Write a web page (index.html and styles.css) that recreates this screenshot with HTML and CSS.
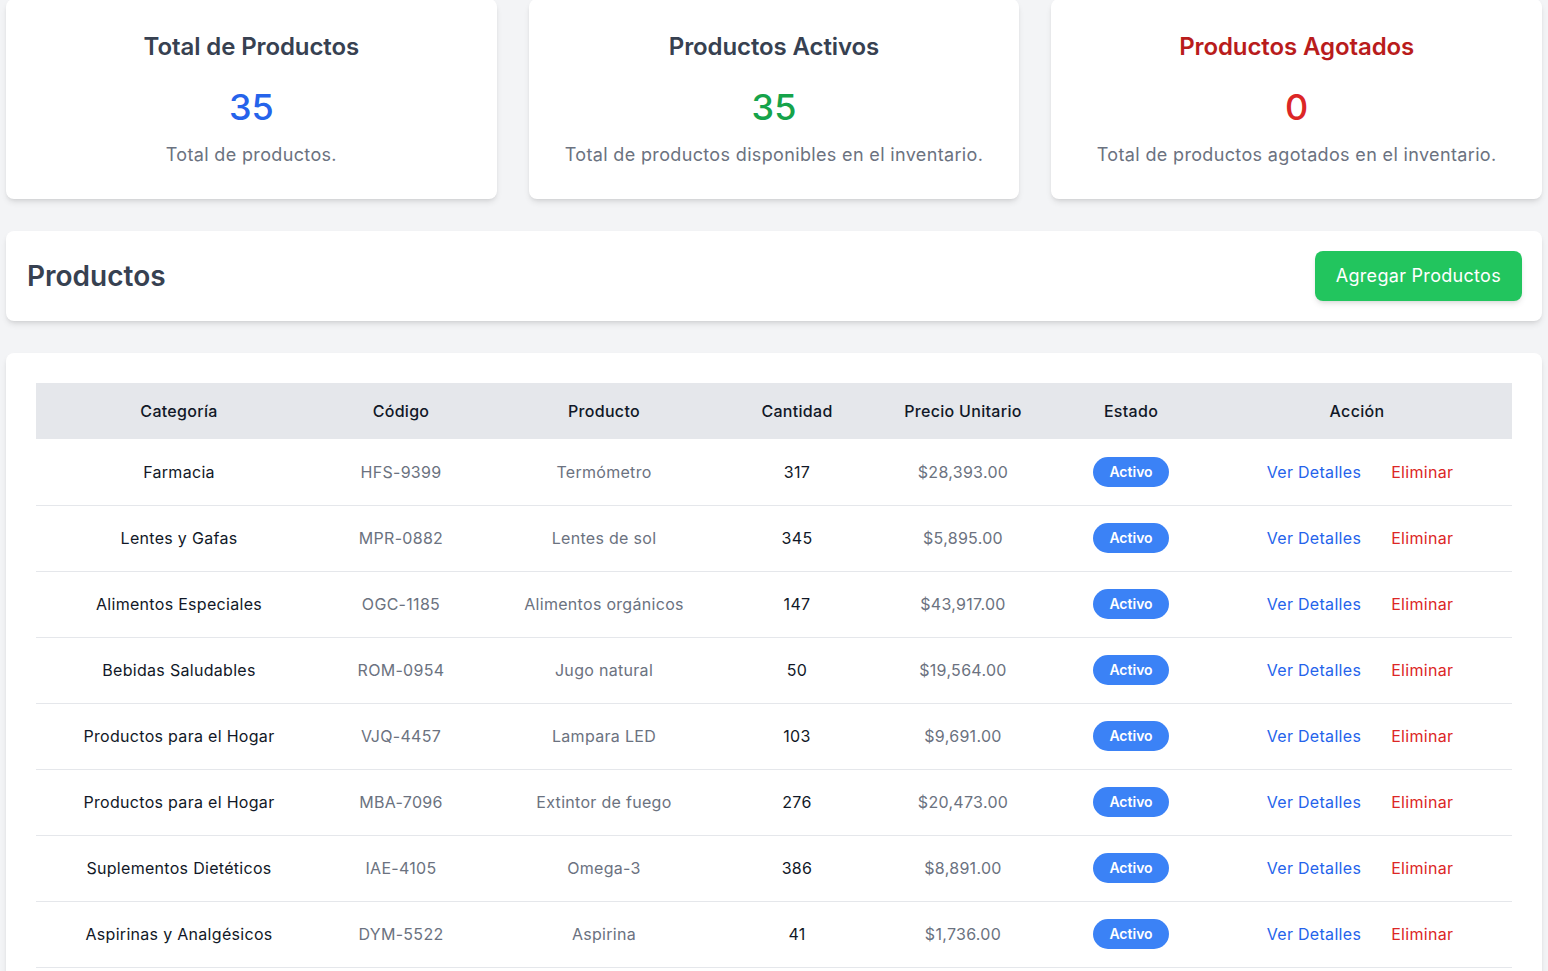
FILE: index.html
```html
<!DOCTYPE html>
<html lang="es">
<head>
<meta charset="utf-8">
<title>Productos</title>
<link rel="stylesheet" href="styles.css">
</head>
<body>
<div class="container">
  <section class="stats">
    <div class="card stat">
      <h2 class="stat-title">Total de Productos</h2>
      <div class="stat-num blue">35</div>
      <p class="stat-desc">Total de productos.</p>
    </div>
    <div class="card stat">
      <h2 class="stat-title">Productos Activos</h2>
      <div class="stat-num green">35</div>
      <p class="stat-desc">Total de productos disponibles en el inventario.</p>
    </div>
    <div class="card stat">
      <h2 class="stat-title red-title">Productos Agotados</h2>
      <div class="stat-num red">0</div>
      <p class="stat-desc">Total de productos agotados en el inventario.</p>
    </div>
  </section>

  <section class="card header-card">
    <h1 class="page-title">Productos</h1>
    <button class="btn-add">Agregar Productos</button>
  </section>

  <section class="card table-card">
    <table class="tbl">
      <thead>
        <tr>
          <th class="c1">Categoría</th>
          <th class="c2">Código</th>
          <th class="c3">Producto</th>
          <th class="c4">Cantidad</th>
          <th class="c5">Precio Unitario</th>
          <th class="c6">Estado</th>
          <th class="c7">Acción</th>
        </tr>
      </thead>
      <tbody>
        <tr><td class="dark">Farmacia</td><td class="muted">HFS-9399</td><td class="muted">Termómetro</td><td class="dark">317</td><td class="muted">$28,393.00</td><td><span class="badge">Activo</span></td><td class="act-cell"><span class="act"><a class="lnk-view">Ver Detalles</a><a class="lnk-del">Eliminar</a></span></td></tr>
        <tr><td class="dark">Lentes y Gafas</td><td class="muted">MPR-0882</td><td class="muted">Lentes de sol</td><td class="dark">345</td><td class="muted">$5,895.00</td><td><span class="badge">Activo</span></td><td class="act-cell"><span class="act"><a class="lnk-view">Ver Detalles</a><a class="lnk-del">Eliminar</a></span></td></tr>
        <tr><td class="dark">Alimentos Especiales</td><td class="muted">OGC-1185</td><td class="muted">Alimentos orgánicos</td><td class="dark">147</td><td class="muted">$43,917.00</td><td><span class="badge">Activo</span></td><td class="act-cell"><span class="act"><a class="lnk-view">Ver Detalles</a><a class="lnk-del">Eliminar</a></span></td></tr>
        <tr><td class="dark">Bebidas Saludables</td><td class="muted">ROM-0954</td><td class="muted">Jugo natural</td><td class="dark">50</td><td class="muted">$19,564.00</td><td><span class="badge">Activo</span></td><td class="act-cell"><span class="act"><a class="lnk-view">Ver Detalles</a><a class="lnk-del">Eliminar</a></span></td></tr>
        <tr><td class="dark">Productos para el Hogar</td><td class="muted">VJQ-4457</td><td class="muted">Lampara LED</td><td class="dark">103</td><td class="muted">$9,691.00</td><td><span class="badge">Activo</span></td><td class="act-cell"><span class="act"><a class="lnk-view">Ver Detalles</a><a class="lnk-del">Eliminar</a></span></td></tr>
        <tr><td class="dark">Productos para el Hogar</td><td class="muted">MBA-7096</td><td class="muted">Extintor de fuego</td><td class="dark">276</td><td class="muted">$20,473.00</td><td><span class="badge">Activo</span></td><td class="act-cell"><span class="act"><a class="lnk-view">Ver Detalles</a><a class="lnk-del">Eliminar</a></span></td></tr>
        <tr><td class="dark">Suplementos Dietéticos</td><td class="muted">IAE-4105</td><td class="muted">Omega-3</td><td class="dark">386</td><td class="muted">$8,891.00</td><td><span class="badge">Activo</span></td><td class="act-cell"><span class="act"><a class="lnk-view">Ver Detalles</a><a class="lnk-del">Eliminar</a></span></td></tr>
        <tr><td class="dark">Aspirinas y Analgésicos</td><td class="muted">DYM-5522</td><td class="muted">Aspirina</td><td class="dark">41</td><td class="muted">$1,736.00</td><td><span class="badge">Activo</span></td><td class="act-cell"><span class="act"><a class="lnk-view">Ver Detalles</a><a class="lnk-del">Eliminar</a></span></td></tr>
      </tbody>
    </table>
  </section>
</div>
</body>
</html>
```

FILE: styles.css
```css
* { box-sizing: border-box; }
html, body { margin: 0; padding: 0; }
body {
  background: #f3f4f6;
  font-family: "Inter", "Noto Sans", sans-serif;
  color: #111827;
}
.container {
  max-width: 1536px;
  margin: -1px auto 0;
  display: flex;
  flex-direction: column;
  gap: 32px;
  padding-bottom: 32px;
}
.card {
  background: #fff;
  border-radius: 8px;
  box-shadow: 0 4px 6px -1px rgba(0,0,0,0.1), 0 2px 4px -2px rgba(0,0,0,0.1);
}
.stats {
  display: grid;
  grid-template-columns: repeat(3, 1fr);
  gap: 32px;
}
.stat {
  padding: 32px 24px 30px;
  text-align: center;
}
.stat-title {
  margin: 0;
  font-size: 24px;
  line-height: 32px;
  font-weight: 600;
  color: #374151;
  letter-spacing: -0.1px;
}
.red-title { color: #b91c1c; }
.stat-num {
  margin-top: 24px;
  font-size: 36px;
  line-height: 40px;
  font-weight: 500;
}
.blue { color: #2563eb; }
.green { color: #16a34a; }
.red { color: #dc2626; }
.stat-desc {
  margin: 14px 0 0;
  font-size: 18px;
  line-height: 28px;
  color: #6b7280;
  letter-spacing: 0.35px;
}
.header-card {
  display: flex;
  align-items: center;
  justify-content: space-between;
  padding: 20px 20px 20px 21px;
}
.page-title {
  margin: 0;
  font-size: 28px;
  line-height: 36px;
  font-weight: 600;
  color: #374151;
}
.btn-add {
  font-family: inherit;
  background: #22c55e;
  color: #fff;
  border: 0;
  border-radius: 8px;
  font-size: 18px;
  line-height: 26px;
  letter-spacing: 0.3px;
  padding: 12px 21px;
  box-shadow: 0 4px 6px -1px rgba(0,0,0,0.1), 0 2px 4px -2px rgba(0,0,0,0.1);
  cursor: pointer;
}
.table-card {
  padding: 30px;
}
.tbl {
  width: 100%;
  border-collapse: collapse;
  text-align: center;
  font-size: 16px;
  letter-spacing: 0.3px;
}
.tbl th {
  background: #e5e7eb;
  height: 56px;
  font-weight: 500;
  color: #111827;
  padding: 0 12px;
}
.tbl td {
  height: 66px;
  padding: 0 12px;
  border-bottom: 1px solid #e5e7eb;
}
.tbl td.act-cell { padding-left: 18px; }
.c1 { width: 286px; }
.c2 { width: 158px; }
.c3 { width: 248px; }
.c4 { width: 138px; }
.c5 { width: 194px; }
.c6 { width: 142px; }
.c7 { width: 310px; }
.dark { color: #111827; }
.muted { color: #6b7280; }
.badge {
  display: inline-block;
  background: #3b82f6;
  color: #fff;
  font-size: 14px;
  font-weight: 600;
  line-height: 20px;
  letter-spacing: 0;
  padding: 5px 16px;
  border-radius: 9999px;
}
.act {
  display: inline-flex;
  gap: 30px;
}
.lnk-view { color: #2563eb; cursor: pointer; }
.lnk-del { color: #dc2626; cursor: pointer; }
```
